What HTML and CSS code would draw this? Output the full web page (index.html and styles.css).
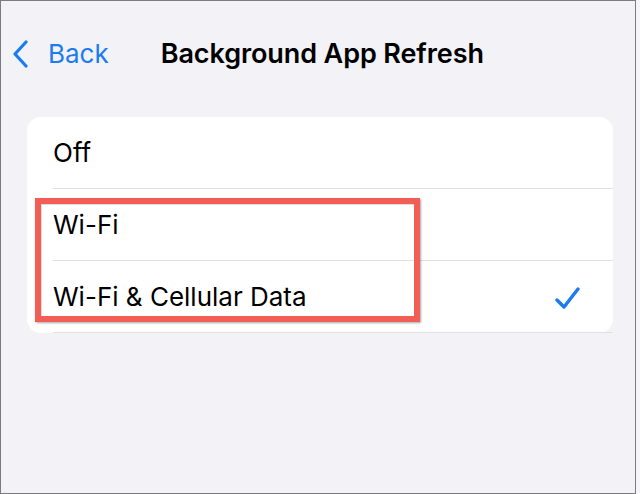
FILE: index.html
```html
<!DOCTYPE html>
<html>
<head>
    <meta charset="UTF-8">
    <title>Background App Refresh</title>
    <link rel="stylesheet" href="styles.css">
</head>
<body>

<div class="screen">
    <div class="navbar">
        <a href="javascript:;" class="back">
            <svg class="chevron" width="16" height="28" viewBox="0 0 16 28">
                <path d="M13 2 L2 14 L13 26" fill="none" stroke="#1a7cf0" stroke-width="3.2" stroke-linecap="round" stroke-linejoin="round"/>
            </svg>
            <span>Back</span>
        </a>
        <div class="title">Background App Refresh</div>
    </div>

    <div class="card">
        <div class="row"><span>Off</span></div>
        <div class="row"><span>Wi-Fi</span></div>
        <div class="row">
            <span>Wi-Fi &amp; Cellular Data</span>
            <svg class="check" width="26" height="24" viewBox="0 0 26 24">
                <path d="M2 14 L9 21 L23 3" fill="none" stroke="#1a7cf0" stroke-width="3.4" stroke-linecap="round" stroke-linejoin="round"/>
            </svg>
        </div>
        <div class="highlight"></div>
    </div>
</div>

</body>
</html>
```

FILE: styles.css
```css
* { margin: 0; padding: 0; box-sizing: border-box; text-decoration: none;}
body { background: #f6f6f9; font-family: "Inter", "Liberation Sans", sans-serif; color: #000;}
.screen { width: 636px; height: 494px; background: #f2f2f7; border: 1px solid #7b7b80; display: flex; flex-direction: column;}
.navbar { height: 116px; display: flex; align-items: flex-start; padding-top: 37px;}
.back { display: flex; align-items: center; color: #1a7cf0; font-size: 26px; margin-left: 12px; height: 32px;}
.chevron { margin-right: 19px;}
.title { margin-left: 52px; font-size: 27px; font-weight: 600; height: 32px; line-height: 32px; letter-spacing: -0.1px;}
.back span { line-height: 32px;}
.card { position: relative; margin: 0 22px 0 26px; background: #fff; border-radius: 14px; padding-left: 26px;}
.row { height: 72px; display: flex; align-items: center; justify-content: space-between; font-size: 26px; border-bottom: 1px solid #e0e0e5; padding-right: 32px;}
.row:last-of-type { border-bottom: none; height: 71px;}
.check { margin-top: 2px;}
.highlight { position: absolute; left: 8px; top: 81px; width: 385px; height: 124px; border: 6px solid #f25d55; box-shadow: 1px 1px 2px rgba(0,0,0,.35), inset 1px 1px 1px rgba(0,0,0,.15);}
```
